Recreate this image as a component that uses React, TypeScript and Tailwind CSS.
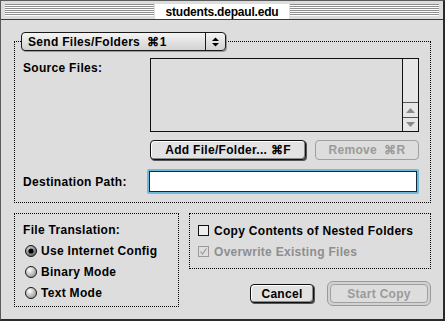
import React from "react";

const Stripes = () => (
  <div className="flex-1 flex flex-col">
    {[0, 1, 2, 3, 4, 5].map((i) => (
      <div key={i} className="h-[2px] border-t border-[#8e8e8e] bg-white" />
    ))}
  </div>
);

const Radio = ({ on }: { on?: boolean }) => (
  <svg width="12" height="12" viewBox="0 0 12 12" className="shrink-0">
    <defs>
      <radialGradient id="radOff" cx="0.38" cy="0.32" r="0.75">
        <stop offset="0" stopColor="#ffffff" />
        <stop offset="1" stopColor="#8f8f8f" />
      </radialGradient>
      <radialGradient id="radOn" cx="0.38" cy="0.32" r="0.75">
        <stop offset="0" stopColor="#d8d8d8" />
        <stop offset="1" stopColor="#555" />
      </radialGradient>
    </defs>
    <circle cx="6" cy="6" r="5.5" fill={on ? "url(#radOn)" : "url(#radOff)"} stroke="#1a1a1a" />
    {on && <circle cx="6" cy="6" r="2.6" fill="#000" />}
  </svg>
);

const Check = ({ checked, disabled }: { checked?: boolean; disabled?: boolean }) => (
  <svg width="11" height="11" viewBox="0 0 11 11" className="shrink-0">
    <rect
      x="0.5"
      y="0.5"
      width="10"
      height="10"
      fill={disabled ? "#dedede" : "#eeeeee"}
      stroke={disabled ? "#9a9a9a" : "#111"}
    />
    {checked && (
      <path d="M2.5 5.5 L4.5 8 L8.5 2.5" fill="none" stroke={disabled ? "#9a9a9a" : "#111"} strokeWidth="1.2" />
    )}
  </svg>
);

const btn =
  "flex items-center justify-center rounded-[4px] border text-[12px] font-bold leading-none whitespace-pre";

export default function App() {
  return (
    <div className="w-[445px] h-[321px] bg-[#dddddd] flex flex-col border-l border-t border-[#5a5a5a] border-r-[2px] border-b-[2px] border-r-[#2a2a2a] border-b-[#2a2a2a] font-['Liberation_Sans',sans-serif] text-black overflow-hidden">
      {/* title bar */}
      <div className="h-[19px] flex items-start gap-[1px] pl-[4px] pr-[4px] pt-[3px] border-b border-[#3a3a3a]">
        <Stripes />
        <div className="w-[134px] h-[15px] bg-white flex items-center justify-center text-[12px] font-bold tracking-[-0.2px]">
          students.depaul.edu
        </div>
        <Stripes />
      </div>

      <div className="flex flex-col pl-[13px] pr-[12px] pt-[12px] tracking-[0.3px]">
        {/* top group */}
        <div className="flex flex-col">
          <div className="relative z-10 ml-[7px] -mb-[10px] w-[205px] h-[19px] flex rounded-[4px] border border-[#1a1a1a] bg-[linear-gradient(#f4f4f4,#d2d2d2)] shadow-[1px_1px_0_#9a9a9a]">
            <div className="flex-1 flex items-center pl-[6px] text-[12px] font-bold whitespace-pre">
              Send Files/Folders  ⌘1
            </div>
            <div className="w-[20px] border-l border-[#1a1a1a] flex flex-col items-center justify-center gap-[2px]">
              <svg width="7" height="10" viewBox="0 0 7 10">
                <path d="M3.5 0.5 L7 4 L0 4 Z" fill="#000" />
                <path d="M0 6 L7 6 L3.5 9.5 Z" fill="#000" />
              </svg>
            </div>
          </div>
          <div className="h-[162px] border border-dotted border-black pl-[8px] pr-[11px] pt-[16px] flex flex-col">
            <div className="flex">
              <div className="w-[127px] pt-[1px] text-[12px] font-bold">Source Files:</div>
              <div className="w-[269px] h-[74px] border border-[#111] bg-[#dddddd] flex justify-end">
                <div className="w-[16px] border-l border-[#111] bg-[#e6e6e6] flex flex-col justify-end">
                  <div className="h-[15px] border-t border-[#555] flex items-center justify-center">
                    <svg width="9" height="5" viewBox="0 0 9 5">
                      <path d="M4.5 0 L9 5 L0 5 Z" fill="#8a8a8a" />
                    </svg>
                  </div>
                  <div className="h-[14px] border-t border-[#555] flex items-center justify-center">
                    <svg width="9" height="5" viewBox="0 0 9 5">
                      <path d="M0 0 L9 0 L4.5 5 Z" fill="#8a8a8a" />
                    </svg>
                  </div>
                </div>
              </div>
            </div>
            <div className="flex ml-[127px] mt-[8px] gap-[9px]">
              <div className={`${btn} w-[156px] h-[20px] border-[#111] bg-[#e2e2e2] shadow-[inset_1px_1px_0_#fff,inset_-1px_-1px_0_#8a8a8a,1px_1px_0_#555]`}>
                Add File/Folder... ⌘F
              </div>
              <div className={`${btn} w-[104px] h-[20px] border-[#a0a0a0] bg-[#dddddd] text-[#9a9a9a]`}>
                Remove  ⌘R
              </div>
            </div>
            <div className="flex items-center mt-[9px]">
              <div className="w-[125px] text-[12px] font-bold">Destination Path:</div>
              <div className="w-[273px] h-[25px] rounded-[2px] bg-[#6fb9da] p-[2px]">
                <div className="h-full border border-[#0e2a3a] bg-white" />
              </div>
            </div>
          </div>
        </div>

        {/* lower row */}
        <div className="flex mt-[10px] gap-[10px]">
          <div className="w-[165px] h-[94px] border border-dotted border-black pl-[8px] pt-[8px] flex flex-col">
            <div className="text-[12px] font-bold h-[15px] flex items-center">File Translation:</div>
            <div className="flex flex-col mt-[6px] gap-[6px] pl-[2px]">
              <div className="flex items-center gap-[4px] h-[15px] text-[12px] font-bold">
                <Radio on />
                Use Internet Config
              </div>
              <div className="flex items-center gap-[4px] h-[15px] text-[12px] font-bold">
                <Radio />
                Binary Mode
              </div>
              <div className="flex items-center gap-[4px] h-[15px] text-[12px] font-bold">
                <Radio />
                Text Mode
              </div>
            </div>
          </div>

          <div className="w-[242px] flex flex-col">
            <div className="h-[56px] border border-dotted border-black pl-[8px] pt-[9px] flex flex-col gap-[6px]">
              <div className="flex items-center gap-[5px] h-[15px] text-[12px] font-bold">
                <Check />
                Copy Contents of Nested Folders
              </div>
              <div className="flex items-center gap-[5px] h-[15px] text-[12px] font-bold text-[#8e8e8e]">
                <Check checked disabled />
                Overwrite Existing Files
              </div>
            </div>
            <div className="flex justify-end items-center mt-[12px] gap-[13px]">
              <div className={`${btn} w-[64px] h-[19px] border-[#111] bg-[#e2e2e2] shadow-[inset_1px_1px_0_#fff,inset_-1px_-1px_0_#8a8a8a,1px_1px_0_#555]`}>
                Cancel
              </div>
              <div className="w-[104px] h-[25px] rounded-[6px] border border-[#9a9a9a] bg-[#d2d2d2] p-[2px]">
                <div className={`${btn} h-full border-[#a0a0a0] bg-[#dddddd] text-[#9a9a9a]`}>Start Copy</div>
              </div>
            </div>
          </div>
        </div>
      </div>
    </div>
  );
}
